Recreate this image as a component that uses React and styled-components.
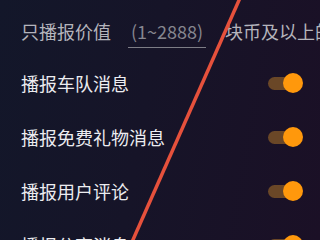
import React from 'react';
import styled, { createGlobalStyle } from 'styled-components';

const GlobalStyle = createGlobalStyle`
  html, body {
    margin: 0;
    padding: 0;
    background: #141628;
  }
  body {
    font-family: "Noto Sans CJK SC", "Noto Sans", sans-serif;
  }
`;

const Screen = styled.div`
  position: relative;
  width: 320px;
  height: 240px;
  overflow: hidden;
  background: linear-gradient(100deg, #13172a 0%, #161428 45%, #1b1026 100%);
`;

const List = styled.div`
  display: flex;
  flex-direction: column;
  padding: 6px 0 0 21px;
`;

const ThresholdRow = styled.div`
  display: flex;
  align-items: center;
  height: 50px;
  font-size: 18px;
  color: #b4b4bc;
  white-space: nowrap;
`;

const ValueInput = styled.div`
  margin: 0 19px 0 17px;
  padding: 0 3px;
  height: 32px;
  display: flex;
  align-items: center;
  box-sizing: border-box;
  border-bottom: 1px solid #7d7d86;
  color: #86868f;
  margin-top: 1px;
`;

const Row = styled.div`
  display: flex;
  align-items: center;
  justify-content: space-between;
  height: 54px;
  padding-right: 17px;
  font-size: 18px;
  color: #ececf0;
  white-space: nowrap;
`;

const Toggle = styled.div`
  position: relative;
  width: 36px;
  height: 20px;
  display: flex;
  align-items: center;
`;

const Track = styled.div`
  width: 34px;
  height: 13px;
  margin-left: 1px;
  border-radius: 7px;
  background: ${p => (p.on ? '#6a4727' : '#555')};
`;

const Thumb = styled.div`
  position: absolute;
  top: 0;
  right: 0;
  width: 20px;
  height: 20px;
  border-radius: 50%;
  background: #ff980c;
`;

const Overlay = styled.svg`
  position: absolute;
  left: 0;
  top: 0;
  pointer-events: none;
`;

const items = ['播报车队消息', '播报免费礼物消息', '播报用户评论', '播报分享消息'];

export default function App() {
  return (
    <>
      <GlobalStyle />
      <Screen>
        <List>
          <ThresholdRow>
            只播报价值
            <ValueInput>(1~2888)</ValueInput>
            块币及以上的
          </ThresholdRow>
          {items.map(t => (
            <Row key={t}>
              {t}
              <Toggle>
                <Track on />
                <Thumb />
              </Toggle>
            </Row>
          ))}
        </List>
        <Overlay width="320" height="240" viewBox="0 0 320 240">
          <line x1="240" y1="-2" x2="132" y2="242" stroke="#e6513c" strokeWidth="3.5" />
        </Overlay>
      </Screen>
    </>
  );
}
